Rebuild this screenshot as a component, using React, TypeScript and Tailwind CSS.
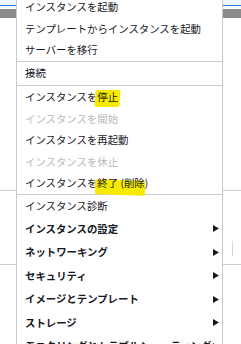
import React from "react";

type Item =
  | { kind: "sep" }
  | {
      kind: "item";
      label: React.ReactNode;
      h: string;
      disabled?: boolean;
      bold?: boolean;
      sub?: boolean;
    };

const Arrow = () => (
  <svg width="6" height="7" viewBox="0 0 6 7" className="shrink-0">
    <path d="M0 0 L6 3.5 L0 7 Z" fill="#16191f" />
  </svg>
);

const Mark = ({ children, cls }: { children: React.ReactNode; cls: string }) => (
  <span className="relative z-0 isolate">
    <span className={`absolute -z-10 bg-[#f7ea00] ${cls}`} />
    {children}
  </span>
);

export default function App() {
  const items: Item[] = [
    { kind: "item", label: "インスタンスを起動", h: "h-[22px]" },
    { kind: "item", label: "テンプレートからインスタンスを起動", h: "h-[21.5px]" },
    { kind: "item", label: "サーバーを移行", h: "h-[21.5px]" },
    { kind: "sep" },
    { kind: "item", label: "接続", h: "h-[23px]" },
    { kind: "sep" },
    {
      kind: "item",
      label: (
        <>
          インスタンスを
          <Mark cls="left-[-2px] right-[-2px] top-[1px] bottom-[-3px] rounded-[2px] skew-x-[-4deg]">停止</Mark>
        </>
      ),
      h: "h-[22px]",
    },
    { kind: "item", label: "インスタンスを開始", h: "h-[21.5px]", disabled: true },
    { kind: "item", label: "インスタンスを再起動", h: "h-[21.5px]" },
    { kind: "item", label: "インスタンスを休止", h: "h-[21.5px]", disabled: true },
    {
      kind: "item",
      label: (
        <>
          インスタンスを
          <Mark cls="left-[-2px] right-[3px] top-[5px] bottom-[-5px] rounded-[2px] skew-y-[2deg]">終了 (削除)</Mark>
        </>
      ),
      h: "h-[21.5px]",
    },
    { kind: "sep" },
    { kind: "item", label: "インスタンス診断", h: "h-[22px]" },
    { kind: "item", label: "インスタンスの設定", h: "h-[23.5px]", bold: true, sub: true },
    { kind: "item", label: "ネットワーキング", h: "h-[23.5px]", bold: true, sub: true },
    { kind: "item", label: "セキュリティ", h: "h-[23.5px]", bold: true, sub: true },
    { kind: "item", label: "イメージとテンプレート", h: "h-[23.5px]", bold: true, sub: true },
    { kind: "item", label: "ストレージ", h: "h-[23.5px]", bold: true, sub: true },
    { kind: "item", label: "モニタリングとトラブルシューティング", h: "h-[23.5px]", bold: true, sub: true },
  ];

  return (
    <div
      className="relative w-[241px] h-[344px] overflow-hidden bg-white"
      style={{ fontFamily: '"Noto Sans CJK JP", "Noto Sans", sans-serif' }}
    >
      {/* page behind the menu */}
      <div className="flex flex-col">
        <div className="h-[5px] bg-[#eef6fc]" />
        <div className="h-[1px] bg-[#2a7fd4]" />
        <div className="h-[3px] bg-white" />
        <div className="h-[9px] bg-[#8b8b8b]" />
        <div className="h-[172px]" />
        <div className="h-px bg-[#cfcfcf]" />
        <div className="h-[50px]" />
        <div className="ml-[232px] w-px h-[15px] bg-[#d8d8d8]" />
        <div className="h-[8px]" />
        <div className="h-px bg-[#cfcfcf]" />
      </div>

      {/* dropdown menu */}
      <div className="absolute left-[16px] top-[-4px] w-[207px] bg-white border-x border-[#c6cacd] flex flex-col">
        {items.map((it, i) =>
          it.kind === "sep" ? (
            <div key={i} className="h-px bg-[#c9cdd0]" />
          ) : (
            <div
              key={i}
              className={`${it.h} shrink-0 flex items-center justify-between pl-[8px] pr-[3px] text-[10.4px] leading-none whitespace-nowrap ${
                it.disabled ? "text-[#b5bbc0]" : "text-[#16191f]"
              } ${it.bold ? "font-bold" : ""}`}
            >
              <span>{it.label}</span>
              {it.sub && <Arrow />}
            </div>
          )
        )}
      </div>
    </div>
  );
}
